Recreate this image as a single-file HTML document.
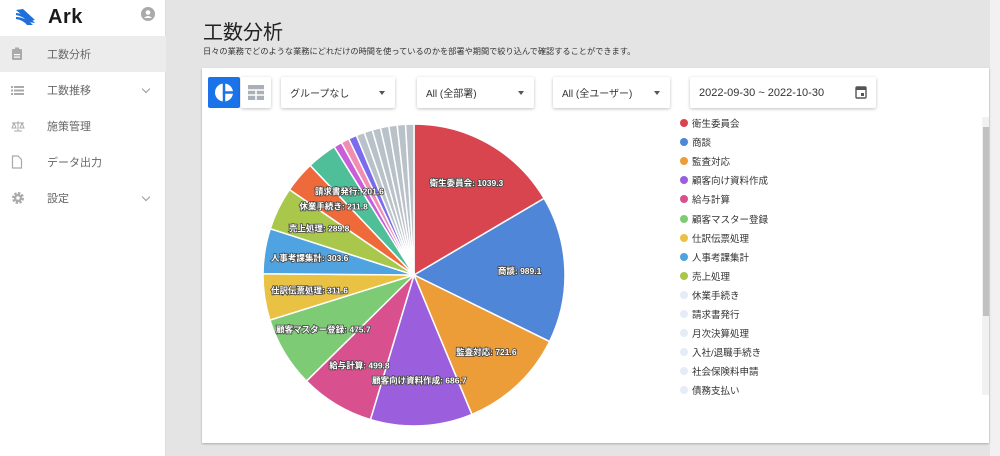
<!DOCTYPE html>
<html><head><meta charset="utf-8"><style>
*{margin:0;padding:0;box-sizing:border-box}
body{width:1000px;height:456px;overflow:hidden;background:#e4e4e4;font-family:"Liberation Sans","Noto Sans CJK JP",sans-serif;position:relative;color:#333}
.side{position:absolute;left:0;top:0;width:166px;height:456px;background:#fff;border-right:1px solid #ddd}
.logo{position:absolute;left:15px;top:4px;height:26px;display:flex;align-items:center}
.logo span{font-size:20px;font-weight:bold;color:#1a1a1a;margin-left:11px;letter-spacing:0.5px}
.nav{position:absolute;left:0;width:166px;height:36px;display:flex;align-items:center;font-size:11px;color:#666}
.nav .ic{position:absolute;left:11px;top:11px}
.nav .t{position:absolute;left:47px}
.nav .ch{position:absolute;left:143px;top:14px;width:6px;height:6px;border-right:1px solid #999;border-bottom:1px solid #999;transform:rotate(45deg)}
h1{position:absolute;left:203px;top:16px;font-size:20px;font-weight:normal;color:#222}
.sub{position:absolute;left:203px;top:45px;font-size:8.2px;color:#333}
.card{position:absolute;left:202px;top:68px;width:787px;height:375px;background:#fff;box-shadow:0 1px 2px rgba(0,0,0,.25)}
.btn{position:absolute;top:77px;height:31px;background:#fff;box-shadow:0 1px 3px rgba(0,0,0,.25);border-radius:2px;font-size:10px;color:#333;display:flex;align-items:center;padding-left:9px}
.btn .ar{position:absolute;right:10px;top:14px;border-left:3.5px solid transparent;border-right:3.5px solid transparent;border-top:4px solid #555}
.leg{position:absolute;left:680px;font-size:9.5px;color:#333;display:flex;align-items:center}
.leg i{display:inline-block;width:8px;height:8px;border-radius:50%;margin-right:4px}
</style></head><body>
<div class="side">
 <div class="logo"><svg width="22" height="18" viewBox="0 0 22 18"><path d="M1 2 L8 1 L20 12 L14 13Z" fill="#1e6fd9"/><path d="M1 7 Q8 8 13 14 L20 15 Q12 6 1 5Z" fill="#1e6fd9"/><path d="M1 11 Q8 12 12 17 L18 17 Q10 9 1 9Z" fill="#1e6fd9"/></svg><span>Ark</span></div>
 <svg style="position:absolute;left:141px;top:7px" width="14" height="14" viewBox="0 0 14 14"><circle cx="7" cy="7" r="7" fill="#aaa"/><circle cx="7" cy="5.5" r="2.3" fill="#fff"/><path d="M3 11 Q7 7 11 11" fill="#fff"/></svg>
 <div class="nav" style="top:36px;background:#ececec"><svg class="ic" width="12" height="14"><rect x="1" y="2" width="10" height="11" rx="1" fill="#aaa"/><rect x="4" y="0.5" width="4" height="3" fill="#aaa"/><rect x="3" y="7" width="6" height="1.2" fill="#fff"/><rect x="3" y="9.5" width="6" height="1.2" fill="#fff"/></svg><span class="t">工数分析</span></div>
 <div class="nav" style="top:72px"><svg class="ic" width="13" height="14"><g fill="#aaa"><rect x="0" y="3" width="2" height="2"/><rect x="3" y="3" width="10" height="2"/><rect x="0" y="6.5" width="2" height="2"/><rect x="3" y="6.5" width="10" height="2"/><rect x="0" y="10" width="2" height="2"/><rect x="3" y="10" width="10" height="2"/></g></svg><span class="t">工数推移</span><span class="ch"></span></div>
 <div class="nav" style="top:108px"><svg class="ic" width="14" height="14"><g stroke="#aaa" fill="none" stroke-width="1"><path d="M1 4 H13 M7 2 V12 M3 12 H11 M3 4 L1 9 H5 Z M11 4 L9 9 H13 Z"/></g></svg><span class="t">施策管理</span></div>
 <div class="nav" style="top:144px"><svg class="ic" width="12" height="14"><path d="M1.5 1 H7 L10.5 4.5 V13 H1.5Z" fill="none" stroke="#aaa" stroke-width="1.2"/></svg><span class="t">データ出力</span></div>
 <div class="nav" style="top:180px"><svg class="ic" width="14" height="14" viewBox="0 0 14 14"><circle cx="7" cy="7" r="4.5" fill="none" stroke="#aaa" stroke-width="3" stroke-dasharray="2.2 1.3"/><circle cx="7" cy="7" r="4" fill="#aaa"/><circle cx="7" cy="7" r="1.8" fill="#fff"/></svg><span class="t">設定</span><span class="ch"></span></div>
</div>
<div style="position:absolute;left:990px;top:0;width:10px;height:456px;background:#f1f1f1"></div>
<h1>工数分析</h1>
<div class="sub">日々の業務でどのような業務にどれだけの時間を使っているのかを部署や期間で絞り込んで確認することができます。</div>
<div class="card"></div>
<div style="position:absolute;left:208px;top:77px;width:32px;height:31px;background:#1a73e8;border-radius:2px"><svg width="32" height="31"><circle cx="16" cy="15.5" r="9" fill="#fff"/><path d="M16 6.5 V15.5 H25" stroke="#1a73e8" stroke-width="2.5" fill="none"/><path d="M16 15.5 V24.5" stroke="#1a73e8" stroke-width="2.5"/></svg></div>
<div style="position:absolute;left:241px;top:77px;width:30px;height:31px;background:#fff;box-shadow:0 1px 3px rgba(0,0,0,.25);border-radius:2px"><svg width="30" height="31"><rect x="7" y="8" width="16" height="15" fill="#aab0b8"/><path d="M7 13H23 M15 13 V23 M7 18 H23" stroke="#fff" stroke-width="1.5"/></svg></div>
<div class="btn" style="left:281px;width:114px">グループなし<span class="ar"></span></div>
<div class="btn" style="left:417px;width:117px">All (全部署)<span class="ar"></span></div>
<div class="btn" style="left:553px;width:117px">All (全ユーザー)<span class="ar"></span></div>
<div class="btn" style="left:690px;width:186px;font-size:11px">2022-09-30 ~ 2022-10-30<svg style="position:absolute;right:9px;top:8px" width="12" height="14"><rect x="1" y="2" width="10" height="11" rx="1" fill="none" stroke="#555" stroke-width="1.4"/><rect x="1" y="2" width="10" height="3" fill="#555"/><rect x="6" y="8" width="3" height="3" fill="#555"/></svg></div>
<svg id="pie" style="position:absolute;left:0;top:0" width="1000" height="456"></svg>
<div id="legend"></div>
<div style="position:absolute;left:982px;top:117px;width:7px;height:278px;background:#f1f1f1"></div>
<div style="position:absolute;left:983px;top:127px;width:6px;height:189px;background:#c1c1c1"></div>
<script>
var d=[["衛生委員会",1039.3,"#d9454f"],["商談",989.1,"#4f86d8"],["監査対応",721.6,"#ed9d38"],["顧客向け資料作成",686.7,"#9b5fde"],["給与計算",499.8,"#d9508f"],["顧客マスター登録",475.7,"#7dcb74"],["仕訳伝票処理",311.6,"#e9c244"],["人事考課集計",303.6,"#4ea3e0"],["売上処理",289.8,"#a9c74a"],["休業手続き",211.8,"#ee6a3b"],["請求書発行",201.6,"#4fbf9a"],["",55,"#c95ed9"],["",55,"#ef8eb2"],["",55,"#7b6bef"]];
for(var i=0;i<7;i++)d.push(["",56,"#b9c1c9"]);
var tot=0;d.forEach(function(x){tot+=x[1]});
var cx=414,cy=275,r=151,a=0,s="";
function pt(an,rr){return [cx+rr*Math.sin(an),cy-rr*Math.cos(an)]}
var labels="";
d.forEach(function(x){var b=a+x[1]/tot*2*Math.PI;var p1=pt(a,r),p2=pt(b,r);
s+='<path d="M'+cx+' '+cy+' L'+p1[0]+' '+p1[1]+' A'+r+' '+r+' 0 '+((b-a)>Math.PI?1:0)+' 1 '+p2[0]+' '+p2[1]+' Z" fill="'+x[2]+'" stroke="#fff" stroke-width="1.5"/>';
if(x[0]){var m=pt((a+b)/2,r*0.7);labels+='<text x="'+m[0]+'" y="'+(m[1]+3)+'" text-anchor="middle" font-size="8.5" font-weight="bold" fill="#fff" stroke="#444" stroke-width="1.6" paint-order="stroke" font-family="Liberation Sans,Noto Sans CJK JP,sans-serif">'+x[0]+': '+x[1]+'</text>';}
a=b;});
document.getElementById("pie").innerHTML=s+labels;
var L=["衛生委員会","商談","監査対応","顧客向け資料作成","給与計算","顧客マスター登録","仕訳伝票処理","人事考課集計","売上処理","休業手続き","請求書発行","月次決算処理","入社/退職手続き","社会保険料申請","債務支払い"];
var h="";L.forEach(function(n,i){var c=i<9?d[i][2]:"#e4ecf5";h+='<div class="leg" style="top:'+(116+i*19.1)+'px"><i style="background:'+c+'"></i>'+n+'</div>';});
document.getElementById("legend").innerHTML=h;
</script>
</body></html>
